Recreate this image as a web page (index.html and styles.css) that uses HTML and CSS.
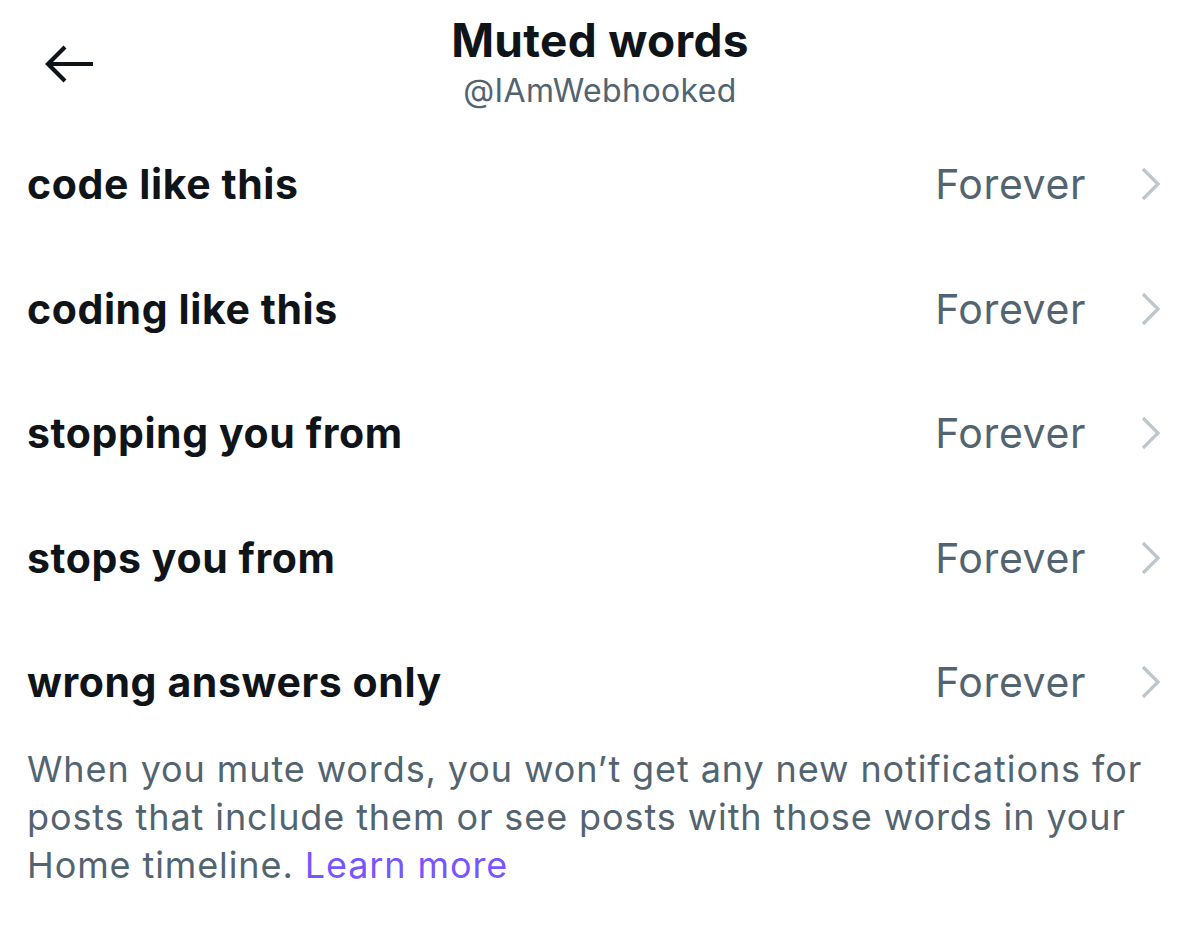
FILE: index.html
```html
<!DOCTYPE html>
<html lang="en">
<head>
<meta charset="utf-8">
<title>Muted words</title>
<link rel="stylesheet" href="styles.css">
</head>
<body>
<div class="page">
  <header class="header">
    <button class="back" aria-label="Back">
      <svg width="52" height="40" viewBox="0 0 52 40"><path d="M50 20H5M22 3L5 20l17 17" fill="none" stroke="#0f1419" stroke-width="4.2"/></svg>
    </button>
    <div class="titles">
      <div class="title">Muted words</div>
      <div class="subtitle">@IAmWebhooked</div>
    </div>
  </header>
  <ul class="list">
    <li class="row"><span class="word">code like this</span><span class="dur">Forever</span><svg class="chev" width="24" height="34" viewBox="0 0 24 34"><path d="M4 2l15 15L4 32" fill="none" stroke="#bcc6cd" stroke-width="3.2"/></svg></li>
    <li class="row"><span class="word">coding like this</span><span class="dur">Forever</span><svg class="chev" width="24" height="34" viewBox="0 0 24 34"><path d="M4 2l15 15L4 32" fill="none" stroke="#bcc6cd" stroke-width="3.2"/></svg></li>
    <li class="row"><span class="word">stopping you from</span><span class="dur">Forever</span><svg class="chev" width="24" height="34" viewBox="0 0 24 34"><path d="M4 2l15 15L4 32" fill="none" stroke="#bcc6cd" stroke-width="3.2"/></svg></li>
    <li class="row"><span class="word">stops you from</span><span class="dur">Forever</span><svg class="chev" width="24" height="34" viewBox="0 0 24 34"><path d="M4 2l15 15L4 32" fill="none" stroke="#bcc6cd" stroke-width="3.2"/></svg></li>
    <li class="row"><span class="word">wrong answers only</span><span class="dur">Forever</span><svg class="chev" width="24" height="34" viewBox="0 0 24 34"><path d="M4 2l15 15L4 32" fill="none" stroke="#bcc6cd" stroke-width="3.2"/></svg></li>
  </ul>
  <p class="note">When you mute words, you won’t get any new notifications for posts that include them or see posts with those words in your Home timeline. <a href="#">Learn more</a></p>
</div>
</body>
</html>
```
FILE: styles.css
```css
html, body {
  margin: 0;
  padding: 0;
  background: #ffffff;
}
body {
  font-family: Inter, "Noto Sans", "Liberation Sans", sans-serif;
  color: #0f1419;
  width: 1200px;
  height: 946px;
  overflow: hidden;
}
.page {
  padding: 0 37px 0 27px;
}
.header {
  position: relative;
  height: 122px;
  margin: 0 -37px 0 -27px;
  display: flex;
  justify-content: center;
}
.back {
  position: absolute;
  left: 43px;
  top: 44px;
  border: 0;
  background: none;
  padding: 0;
}
.titles {
  display: flex;
  flex-direction: column;
  align-items: center;
  padding-top: 13px;
}
.title {
  font-size: 46px;
  font-weight: 700;
  letter-spacing: 0.3px;
  line-height: 54px;
}
.subtitle {
  font-size: 32px;
  color: #536471;
  line-height: 48px;
  letter-spacing: 0.4px;
}
.list {
  list-style: none;
  margin: 0;
  padding: 0;
}
.row {
  display: flex;
  align-items: center;
  height: 124.5px;
}
.word {
  flex: 1;
  font-size: 41px;
  font-weight: 700;
  letter-spacing: 0.6px;
}
.dur {
  font-size: 41px;
  color: #536471;
  letter-spacing: 0.6px;
  margin-right: 53px;
}
.chev {
  display: block;
}
.note {
  margin: 0;
  font-size: 36px;
  line-height: 48px;
  color: #536471;
  letter-spacing: 0.9px;
}
.note a {
  color: #7856ff;
  text-decoration: none;
}
```
